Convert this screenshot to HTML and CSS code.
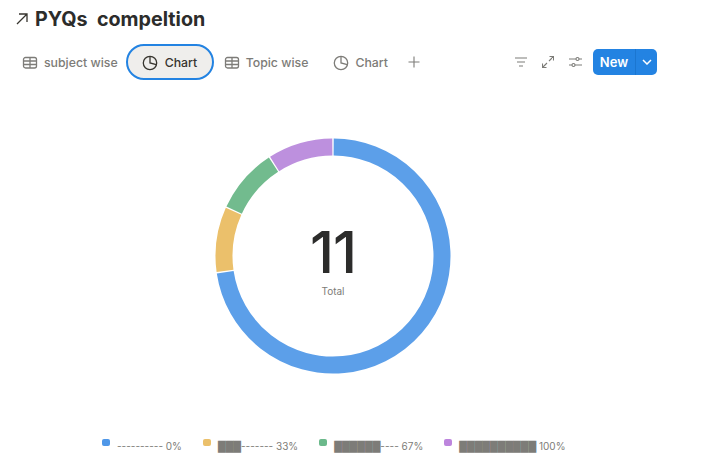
FILE: index.html
```html
<!DOCTYPE html>
<html lang="en">
<head>
    <meta charset="UTF-8">
    <meta name="viewport" content="width=device-width, initial-scale=1.0">
    <title>PYQs compeltion</title>
    <link rel="stylesheet" href="styles.css">
</head>
<body>
    <header class="page-title">
        <svg class="title-arrow" width="14" height="14" viewBox="0 0 14 14"><path d="M2 12 L12 2 M4 2 H12 V10"/></svg>
        <h1>PYQs&nbsp; compeltion</h1>
    </header>

    <nav class="toolbar">
        <div class="tabs">
            <a class="tab">
                <svg class="tab-icon" width="16" height="16" viewBox="0 0 16 16"><rect x="1.5" y="2.5" width="13" height="10.5" rx="2"/><path d="M1.5 6 H14.5 M1.5 9.5 H14.5 M8 2.5 V13"/></svg>
                subject wise
            </a>
            <a class="tab tab-active">
                <svg class="tab-icon" width="16" height="16" viewBox="0 0 16 16"><circle cx="8" cy="8" r="6.7"/><path d="M8 1.3 V8 L14.3 9.6"/></svg>
                Chart
            </a>
            <a class="tab">
                <svg class="tab-icon" width="16" height="16" viewBox="0 0 16 16"><rect x="1.5" y="2.5" width="13" height="10.5" rx="2"/><path d="M1.5 6 H14.5 M1.5 9.5 H14.5 M8 2.5 V13"/></svg>
                Topic wise
            </a>
            <a class="tab tab-last">
                <svg class="tab-icon" width="16" height="16" viewBox="0 0 16 16"><circle cx="8" cy="8" r="6.7"/><path d="M8 1.3 V8 L14.3 9.6"/></svg>
                Chart
            </a>
            <svg class="tab-add" width="12" height="12" viewBox="0 0 12 12"><path d="M6 .5 V11.5 M.5 6 H11.5"/></svg>
        </div>
        <div class="actions">
            <svg class="action-icon" width="12" height="10" viewBox="0 0 12 10"><path d="M0 1 H12 M2 5 H10 M4 9 H8"/></svg>
            <svg class="action-icon" width="12" height="12" viewBox="0 0 12 12"><path d="M7 5 L11.5 .5 M7.5 .5 H11.5 V4.5 M5 7 L.5 11.5 M.5 7.5 V11.5 H4.5"/></svg>
            <svg class="action-icon" width="13" height="12" viewBox="0 0 13 12"><path d="M0 3 H7 M10 3 H13 M0 9 H3 M6 9 H13"/><circle cx="8.5" cy="3" r="1.5"/><circle cx="4.5" cy="9" r="1.5"/></svg>
            <div class="new-btn">
                <span class="new-label">New</span>
                <span class="new-caret"><svg width="10" height="6" viewBox="0 0 10 6"><path d="M1 1 L5 5 L9 1"/></svg></span>
            </div>
        </div>
    </nav>

    <main class="chart">
        <div class="donut">
            <svg width="238" height="238" viewBox="0 0 238 238">
                <path class="ring" data-from="0" data-to="8" stroke="#5c9fe9"/>
                <path class="ring" data-from="8" data-to="9" stroke="#ebc06b"/>
                <path class="ring" data-from="9" data-to="10" stroke="#72bb8e"/>
                <path class="ring" data-from="10" data-to="11" stroke="#bd90de"/>
            </svg>
            <div class="donut-label">
                <div class="donut-value">11</div>
                <div class="donut-caption">Total</div>
            </div>
        </div>
    </main>

    <footer class="legend">
        <div class="legend-item"><span class="dot dot-blue"></span>---------- 0%</div>
        <div class="legend-item"><span class="dot dot-yellow"></span>███------- 33%</div>
        <div class="legend-item"><span class="dot dot-green"></span>██████---- 67%</div>
        <div class="legend-item"><span class="dot dot-purple"></span>██████████ 100%</div>
    </footer>

    <script>
        // 11 rows split in elevenths, small gap between the slices
        const pt = (deg) => {
            const a = deg * Math.PI / 180;
            return (119 + 109 * Math.sin(a)).toFixed(2) + ' ' + (119 - 109 * Math.cos(a)).toFixed(2);
        };
        document.querySelectorAll('.ring').forEach((seg) => {
            const start = seg.dataset.from / 11 * 360 + 0.35;
            const end = seg.dataset.to / 11 * 360 - 0.35;
            const large = end - start > 180 ? 1 : 0;
            seg.setAttribute('d', `M${pt(start)} A109 109 0 ${large} 1 ${pt(end)}`);
        });
    </script>
</body>
</html>
```
FILE: styles.css
```css
body {
    margin: 0;
    background-color: #fff;
    color: #2c2c2b;
    font-family: Inter, "Liberation Sans", sans-serif;
    height: 467px;
    overflow: hidden;
}
.page-title {
    display: flex;
    align-items: center;
    gap: 6px;
    height: 20px;
    padding: 9px 0 0 15px;
}
.page-title h1 {
    margin: 0;
    font-size: 19.7px;
    font-weight: 700;
    line-height: 20px;
}
.title-arrow path {
    fill: none;
    stroke: #37352f;
    stroke-width: 1.3;
}
.toolbar {
    display: flex;
    justify-content: space-between;
    align-items: center;
    height: 36px;
    margin-top: 15px;
    padding: 0 53px 0 12px;
}
.tabs {
    display: flex;
    align-items: center;
}
.tab {
    display: flex;
    align-items: center;
    gap: 6px;
    height: 36px;
    padding: 1px 10px 0;
    box-sizing: border-box;
    color: #7d7c78;
    font-size: 12.3px;
    font-weight: 500;
    white-space: nowrap;
}
.tab-active {
    width: 88px;
    margin: 0 0 0 -2px;
    padding: 1px 14px 0;
    background-color: #efeeec;
    border: 2px solid #2383e2;
    border-radius: 18px;
    color: #37352f;
    gap: 7px;
}
.tab-last {
    margin-left: 5px;
}
.tab-icon * {
    fill: none;
    stroke: currentColor;
    stroke-width: 1.3;
}
.tab-add {
    margin-left: 10px;
}
.tab-add path, .action-icon * {
    fill: none;
    stroke: #7d7c78;
    stroke-width: 1.1;
}
.actions {
    display: flex;
    align-items: center;
    gap: 15px;
}
.new-btn {
    display: flex;
    height: 26px;
    margin-left: -4px;
    background-color: #2383e2;
    border-radius: 5px;
    color: #fff;
    font-size: 13px;
    font-weight: 600;
    overflow: hidden;
}
.new-label {
    display: flex;
    align-items: center;
    justify-content: center;
    width: 42px;
    border-right: 1px solid #1b76d0;
}
.new-caret {
    display: flex;
    align-items: center;
    justify-content: center;
    width: 21px;
}
.new-caret path {
    fill: none;
    stroke: #fff;
    stroke-width: 1.5;
}
.chart {
    display: flex;
    justify-content: center;
    padding: 57px 44px 0 0;
}
.donut {
    position: relative;
    width: 238px;
    height: 238px;
}
.ring {
    fill: none;
    stroke-width: 17;
}
.donut-label {
    position: absolute;
    inset: 0;
    display: flex;
    flex-direction: column;
    align-items: center;
    justify-content: center;
}
.donut-value {
    font-size: 58px;
    line-height: 56px;
    letter-spacing: -1px;
    margin-top: 9px;
    font-weight: 500;
}
.donut-caption {
    margin-top: 5px;
    color: #7d7c78;
    font-size: 10px;
    line-height: 12px;
}
.legend {
    display: flex;
    gap: 21px;
    margin-top: 64px;
    padding-left: 102px;
    color: #7d7c78;
    font-size: 10px;
    font-family: Inter, "DejaVu Sans", sans-serif;
}
.legend-item {
    display: flex;
    align-items: center;
    gap: 7px;
    white-space: nowrap;
}
.dot {
    width: 8px;
    height: 7px;
    margin-bottom: 6px;
    border-radius: 2px;
}
.dot-blue { background-color: #4f97e8; }
.dot-yellow { background-color: #ebc06b; }
.dot-green { background-color: #6bb98b; }
.dot-purple { background-color: #bd85dd; }
```
